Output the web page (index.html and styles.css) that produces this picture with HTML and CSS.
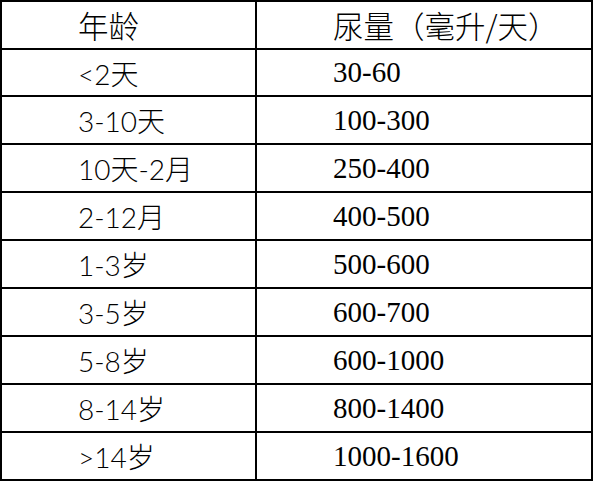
FILE: index.html
```html
<!DOCTYPE html>
<html lang="zh">
<head>
<meta charset="utf-8">
<title>尿量</title>
<link rel="stylesheet" href="styles.css">
</head>
<body>
<div class="table">
  <div class="cell age head">年龄</div><div class="cell vol head">尿量（毫升/天）</div>
  <div class="cell age">&lt;2天</div><div class="cell vol">30-60</div>
  <div class="cell age">3-10天</div><div class="cell vol">100-300</div>
  <div class="cell age">10天-2月</div><div class="cell vol">250-400</div>
  <div class="cell age">2-12月</div><div class="cell vol">400-500</div>
  <div class="cell age">1-3岁</div><div class="cell vol">500-600</div>
  <div class="cell age">3-5岁</div><div class="cell vol">600-700</div>
  <div class="cell age">5-8岁</div><div class="cell vol">600-1000</div>
  <div class="cell age">8-14岁</div><div class="cell vol">800-1400</div>
  <div class="cell age">&gt;14岁</div><div class="cell vol">1000-1600</div>
</div>
</body>
</html>
```
FILE: styles.css
```css
html, body {
  margin: 0;
  padding: 0;
  background: #fff;
}
.table {
  display: grid;
  grid-template-columns: 253px 334px;
  grid-template-rows: 46px 45px repeat(8, 46px);
  gap: 2px;
  padding: 2px;
  background: #000;
  width: 593px;
  box-sizing: border-box;
}
.cell {
  background: #fff;
  display: flex;
  align-items: center;
  color: #000;
  white-space: nowrap;
}
.age {
  padding-left: 76px;
  font-size: 28px;
  font-weight: 300;
  font-family: Lato, "Noto Sans CJK SC", sans-serif;
}
.vol {
  padding-left: 76px;
  font-size: 29px;
  font-family: "Liberation Serif", "Noto Sans CJK SC", serif;
}
.head {
  font-size: 30.5px;
  font-family: "Noto Sans CJK SC", sans-serif;
  font-weight: 300;
}
```
